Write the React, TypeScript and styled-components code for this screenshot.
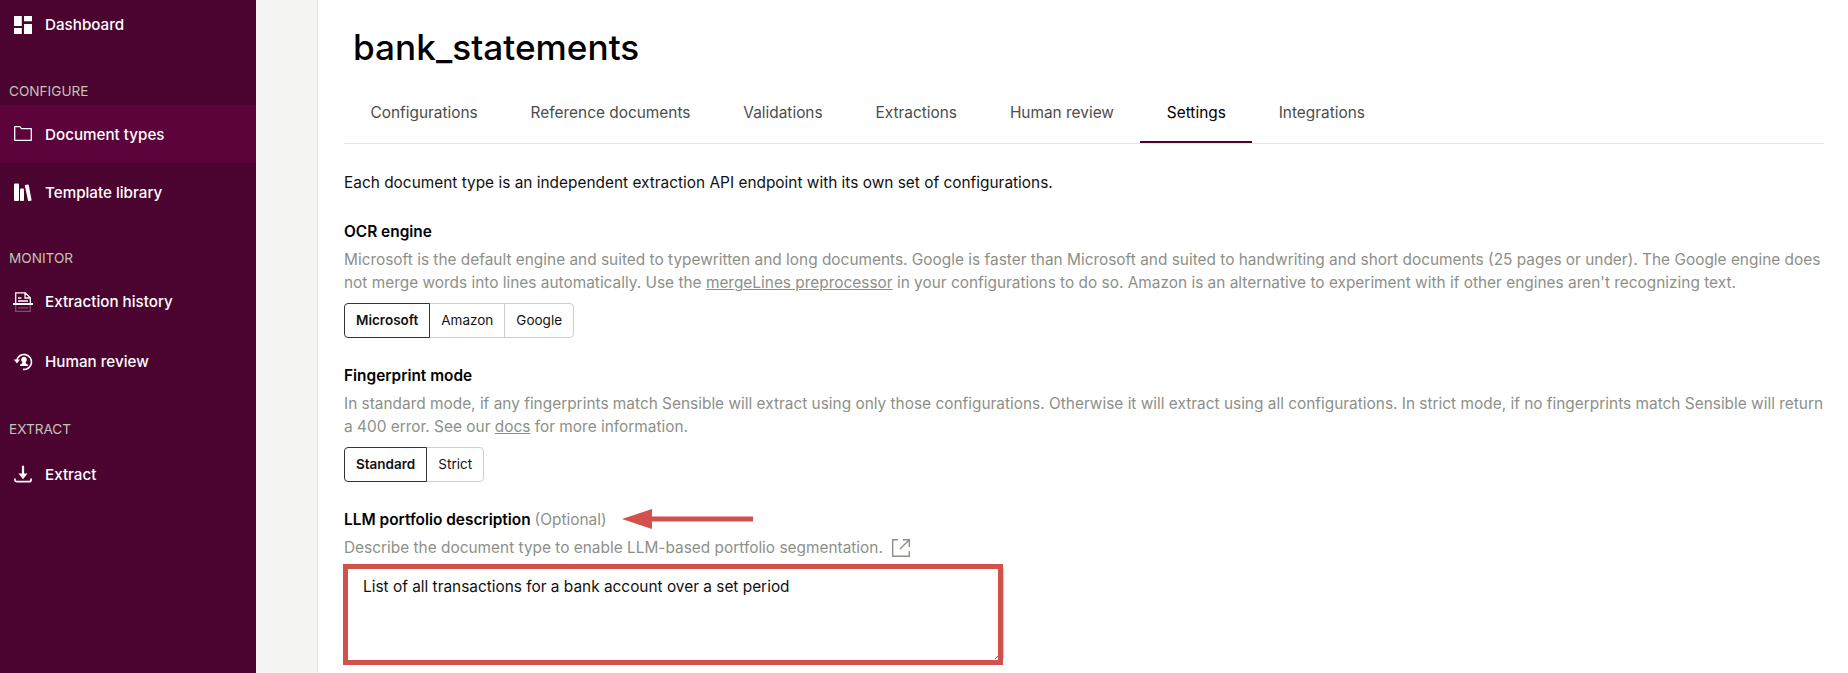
import React from 'react';
import styled, { createGlobalStyle, css } from 'styled-components';

const GlobalStyle = createGlobalStyle`
  *, *::before, *::after { box-sizing: border-box; }
  body { margin: 0; background: #fff; font-family: Inter, "Liberation Sans", sans-serif; }
`;

const Page = styled.div`
  display: flex;
  width: 100%;
  height: 673px;
  overflow: hidden;
`;

const Sidebar = styled.nav`
  width: 256px;
  flex: none;
  background: #4b0430;
`;

const NavItem = styled.a<{ $active?: boolean; $height?: number }>`
  display: flex;
  align-items: center;
  height: ${(p) => p.$height ?? 58}px;
  padding-left: 13px;
  gap: 12px;
  color: #fff;
  font-size: 15.2px;
  font-weight: 500;
  line-height: 24px;
  background: ${(p) => (p.$active ? '#5c033b' : 'transparent')};
  svg { flex: none; }
  span { padding-top: ${(p) => (p.$height ? 0 : 2)}px; }
`;

const NavHeading = styled.div<{ $top: number; $bottom: number }>`
  padding: ${(p) => p.$top}px 0 ${(p) => p.$bottom}px 9px;
  font-size: 13.6px;
  line-height: 20px;
  color: #c5c2b8;
`;

const Gutter = styled.div`
  width: 62px;
  flex: none;
  background: #f4f4f2;
  border-right: 1px solid #e5e7eb;
`;

const Main = styled.main`
  flex: 1;
  min-width: 0;
  padding: 23px 24px 0 26px;
  font-size: 15.41px;
`;

const Title = styled.h1`
  margin: 0;
  padding-left: 9px;
  font-size: 35.2px;
  line-height: 48px;
  font-weight: 500;
  color: #000;
`;

const Tabs = styled.div`
  display: flex;
  height: 60px;
  margin-top: 13px;
  border-bottom: 1px solid #e5e5e3;
`;

const Tab = styled.div<{ $active?: boolean }>`
  padding: 17px 26.45px 0;
  line-height: 24px;
  color: #4c4d4a;
  ${(p) =>
    p.$active &&
    css`
      color: #000;
      border-bottom: 2px solid #4b0430;
    `}
`;

const Intro = styled.p`
  margin: 27px 0 0;
  line-height: 24px;
  color: #111;
`;

const Section = styled.section<{ $top: number }>`
  margin-top: ${(p) => p.$top}px;
`;

const Heading = styled.h2`
  display: flex;
  align-items: center;
  margin: 0 0 5px;
  font-size: inherit;
  line-height: 23px;
  font-weight: 600;
  color: #000;
`;

const Optional = styled.span`
  margin-left: 4px;
  font-weight: 400;
  color: #8d9088;
`;

const ArrowIcon = styled.svg`
  margin: 0 0 2px 15px;
`;

const Description = styled.p`
  display: flex;
  align-items: center;
  margin: 0;
  line-height: 23px;
  color: #8d9088;
`;

const Paragraph = styled(Description)`
  display: block;
  white-space: nowrap;
`;

const Link = styled.a`
  text-decoration: underline;
`;

const Segments = styled.div`
  display: flex;
  margin-top: 9px;
`;

const Segment = styled.button<{ $active?: boolean }>`
  height: 35px;
  margin: 0 0 0 -1px;
  padding: 0 11px 1px;
  border: 1px solid ${(p) => (p.$active ? '#333' : '#cfcfc9')};
  background: #fff;
  font: ${(p) => (p.$active ? 600 : 400)} 13.5px/20px Inter, sans-serif;
  color: #111;
  position: relative;
  z-index: ${(p) => (p.$active ? 1 : 0)};
  &:first-child { margin-left: 0; border-radius: 4px 0 0 4px; }
  &:last-child { border-radius: 0 4px 4px 0; }
`;

const Field = styled.div`
  position: relative;
  width: 660px;
  margin-top: 7px;
`;

const TextBox = styled.textarea`
  display: block;
  width: 100%;
  height: 95px;
  margin: 0;
  padding: 8px 18px;
  border: 1px solid #cfcfc9;
  border-radius: 4px;
  outline: none;
  font: 15.4px/24px Inter, sans-serif;
  color: #111;
`;

const Highlight = styled.div`
  position: absolute;
  inset: -2px 1px -4px -1px;
  border: 5px solid #d2514a;
  pointer-events: none;
`;

const DashboardIcon = () => (
  <svg width="20" height="20" viewBox="0 0 20 20" fill="#fff">
    <path d="M1 1h7.8v10H1zM11 1h8v5.3h-8zM11 9h8v10h-8zM1 13h7.8v6H1z" />
  </svg>
);

const FolderIcon = () => (
  <svg width="20" height="20" viewBox="0 0 20 20" fill="none" stroke="#fff" strokeWidth="1.3">
    <path d="M1.7 2.7h5.2l1.6 2h9.8v11.6H1.7z" strokeLinejoin="round" />
  </svg>
);

const LibraryIcon = () => (
  <svg width="20" height="20" viewBox="0 0 20 20" fill="#fff">
    <rect x="1" y="1.5" width="5" height="17.5" rx="1" />
    <rect x="7" y="6.5" width="4" height="12.5" rx="1" />
    <path d="M11.8 3.6q0-.6.6-.7l2.5-.5q.7-.1.8.6l2.9 15q.1.7-.6.8l-2.2.2q-.7.1-.8-.6z" />
  </svg>
);

const HistoryIcon = () => (
  <svg width="20" height="20" viewBox="0 0 20 20" fill="none" stroke="#fff" strokeWidth="1.3">
    <path d="M2.7 11V.8h9.6l5 5V11M12 1v5h5M5 6h3.4M5 9h10" />
    <path d="M0 12h20" strokeWidth="2" />
    <path d="M2.7 13v6.3h14.6V13M5 15.8h10" opacity=".3" />
  </svg>
);

const ReviewIcon = () => (
  <svg width="20" height="20" viewBox="0 0 20 20" fill="none" stroke="#fff" strokeWidth="1.6">
    <path d="M3.7 8.5A7.5 7.5 0 1 1 10 17.4" />
    <path d="M.8 7.4h6.2L4 11.5z" fill="#fff" stroke="none" />
    <path d="M11 4.8a3 3 0 0 1 1.8 5.3v1.3l2.1 1.2v1.3H7.1v-1.3l2.1-1.2v-1.3A3 3 0 0 1 11 4.8z" fill="#fff" stroke="none" />
  </svg>
);

const ExtractIcon = () => (
  <svg width="20" height="20" viewBox="0 0 20 20" fill="none" stroke="#fff" strokeWidth="1.7">
    <path d="M1.9 14.5v1.2a2 2 0 0 0 2 2h12.2a2 2 0 0 0 2-2v-1.2" />
    <path d="M10 1.7v9" strokeWidth="2.2" />
    <path d="M5.5 9.6h9L10 15.2z" fill="#fff" stroke="none" />
  </svg>
);

const ExternalIcon = styled.svg`
  margin-left: 9px;
`;

export default function App() {
  return (
    <>
      <GlobalStyle />
      <Page>
        <Sidebar>
          <NavItem $height={49}><DashboardIcon /><span>Dashboard</span></NavItem>
          <NavHeading $top={32} $bottom={4}>CONFIGURE</NavHeading>
          <NavItem $active><FolderIcon /><span>Document types</span></NavItem>
          <NavItem><LibraryIcon /><span>Template library</span></NavItem>
          <NavHeading $top={27} $bottom={4}>MONITOR</NavHeading>
          <NavItem $height={60}><HistoryIcon /><span>Extraction history</span></NavItem>
          <NavItem $height={60}><ReviewIcon /><span>Human review</span></NavItem>
          <NavHeading $top={27} $bottom={6}>EXTRACT</NavHeading>
          <NavItem><ExtractIcon /><span>Extract</span></NavItem>
        </Sidebar>
        <Gutter />
        <Main>
          <Title>bank_statements</Title>
          <Tabs>
            <Tab>Configurations</Tab>
            <Tab>Reference documents</Tab>
            <Tab>Validations</Tab>
            <Tab>Extractions</Tab>
            <Tab>Human review</Tab>
            <Tab $active>Settings</Tab>
            <Tab>Integrations</Tab>
          </Tabs>
          <Intro>Each document type is an independent extraction API endpoint with its own set of configurations.</Intro>
          <Section $top={25}>
            <Heading>OCR engine</Heading>
            <Paragraph>
              Microsoft is the default engine and suited to typewritten and long documents. Google is faster than Microsoft and suited to handwriting and short documents (25 pages or under). The Google engine does
              <br />
              not merge words into lines automatically. Use the <Link>mergeLines preprocessor</Link> in your configurations to do so. Amazon is an alternative to experiment with if other engines aren't recognizing text.
            </Paragraph>
            <Segments>
              <Segment $active>Microsoft</Segment>
              <Segment>Amazon</Segment>
              <Segment>Google</Segment>
            </Segments>
          </Section>
          <Section $top={26}>
            <Heading>Fingerprint mode</Heading>
            <Paragraph>
              In standard mode, if any fingerprints match Sensible will extract using only those configurations. Otherwise it will extract using all configurations. In strict mode, if no fingerprints match Sensible will return
              <br />
              a 400 error. See our <Link>docs</Link> for more information.
            </Paragraph>
            <Segments>
              <Segment $active>Standard</Segment>
              <Segment>Strict</Segment>
            </Segments>
          </Section>
          <Section $top={26}>
            <Heading>
              LLM portfolio description <Optional>(Optional)</Optional>
              <ArrowIcon width="131" height="20" viewBox="0 0 131 20" fill="#d2514a">
                <path d="M0 10L30 0v7.5h101v5H30V20z" />
              </ArrowIcon>
            </Heading>
            <Description>
              Describe the document type to enable LLM-based portfolio segmentation.
              <ExternalIcon width="18" height="18" viewBox="0 0 18 18" fill="none" stroke="#8d9088" strokeWidth="1.4">
                <path d="M6 .7H.7v16.6h16.6V12M11 .7h6.3V8M17.3 .7L8 10" />
              </ExternalIcon>
            </Description>
            <Field>
              <TextBox defaultValue="List of all transactions for a bank account over a set period" />
              <Highlight />
            </Field>
          </Section>
        </Main>
      </Page>
    </>
  );
}
